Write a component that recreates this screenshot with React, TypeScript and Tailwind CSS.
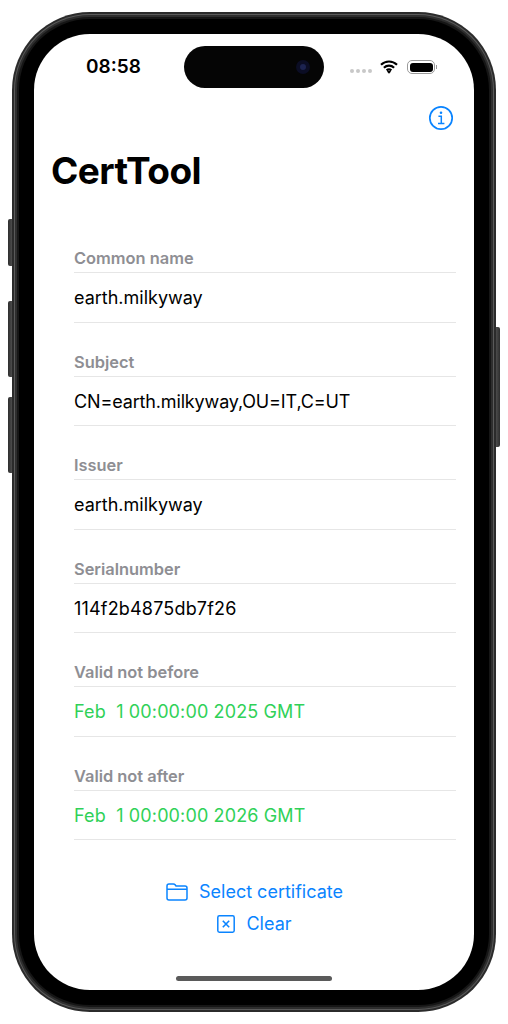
import React from 'react';

const rows = [
  { label: 'Common name', value: 'earth.milkyway', track: 'tracking-normal' },
  { label: 'Subject', value: 'CN=earth.milkyway,OU=IT,C=UT', track: 'tracking-[-0.15px]' },
  { label: 'Issuer', value: 'earth.milkyway', track: 'tracking-normal' },
  { label: 'Serialnumber', value: '114f2b4875db7f26', track: 'tracking-[0.18px]' },
  { label: 'Valid not before', value: 'Feb\u00a0\u00a01 00:00:00 2025 GMT', green: true, track: 'tracking-[0.13px]' },
  { label: 'Valid not after', value: 'Feb\u00a0\u00a01 00:00:00 2026 GMT', green: true, track: 'tracking-[0.13px]' },
];

function StatusBar() {
  return (
    <div className="relative h-[72px] shrink-0">
      <span className="absolute left-[52px] top-[20px] text-[19px] leading-[26px] font-semibold text-black">08:58</span>
      <div className="absolute left-[150px] top-[12px] h-[42px] w-[140px] rounded-[21px] bg-[#050505]">
        <div className="absolute left-[112px] top-[14px] h-[14px] w-[14px] rounded-full bg-[#0b0d24]">
          <div className="absolute left-[4px] top-[4px] h-[6px] w-[6px] rounded-full bg-[#1c2350]"></div>
        </div>
      </div>
      <div className="absolute left-[316px] top-[35px] flex gap-[2px]">
        <span className="h-[4px] w-[4px] rounded-full bg-[#c8c8c8]"></span>
        <span className="h-[4px] w-[4px] rounded-full bg-[#c8c8c8]"></span>
        <span className="h-[4px] w-[4px] rounded-full bg-[#c8c8c8]"></span>
        <span className="h-[4px] w-[4px] rounded-full bg-[#c8c8c8]"></span>
      </div>
      <svg className="absolute left-[346px] top-[26px]" width="18" height="14" viewBox="0 0 18 14" fill="none" stroke="#000" strokeWidth="2.2">
        <path d="M1 4.8C5.5 0.4 12.5 0.4 17 4.8" />
        <path d="M3.9 7.8C6.8 5 11.2 5 14.1 7.8" />
        <path d="M6.6 10.4C8 9.2 10 9.2 11.4 10.4" />
        <path d="M9 13.8L6.9 11.5C8.1 10.6 9.9 10.6 11.1 11.5Z" fill="#000" stroke="none" />
      </svg>
      <div className="absolute left-[373px] top-[26px] flex items-center">
        <div className="h-[14px] w-[28px] rounded-[5px] border border-[#9a9a9a] p-[1.5px]">
          <div className="h-full w-full rounded-[3px] bg-black"></div>
        </div>
        <div className="ml-[1px] h-[4px] w-[1px] bg-[#9a9a9a]"></div>
      </div>
    </div>
  );
}

function InfoIcon() {
  return (
    <svg width="26" height="26" viewBox="0 0 26 26" fill="none" stroke="#0a84ff" strokeWidth="1.7">
      <circle cx="13" cy="13" r="11.2" />
      <path d="M10.4 11.2H13.3V18.4M10 18.6H16.4" strokeWidth="1.5" />
      <circle cx="13" cy="7.8" r="1.3" fill="#0a84ff" stroke="none" />
    </svg>
  );
}

function FolderIcon() {
  return (
    <svg width="22" height="18" viewBox="0 0 22 18" fill="none" stroke="#0a84ff" strokeWidth="1.5">
      <path d="M1 4V3Q1 1 3 1H7.4Q8.4 1 9.1 1.8L10 3H19Q21 3 21 5V15Q21 17 19 17H3Q1 17 1 15Z" strokeLinejoin="round" />
      <path d="M1 6.3H21" />
    </svg>
  );
}

function ClearIcon() {
  return (
    <svg width="18" height="18" viewBox="0 0 18 18" fill="none" stroke="#0a84ff" strokeWidth="1.5">
      <rect x="0.8" y="0.8" width="16.4" height="16.4" rx="1.6" />
      <path d="M5.8 5.8L12.2 12.2M12.2 5.8L5.8 12.2" strokeWidth="1.6" />
    </svg>
  );
}

export default function App() {
  return (
    <div className="relative h-[1024px] w-[508px] overflow-hidden bg-white font-['Inter',sans-serif]">
      {/* side buttons */}
      <div className="absolute left-[8px] top-[219px] h-[47px] w-[6px] rounded-l-[2px] bg-linear-to-r from-[#2e2e2e] to-[#5c5c5c]"></div>
      <div className="absolute left-[8px] top-[301px] h-[76px] w-[6px] rounded-l-[2px] bg-linear-to-r from-[#2e2e2e] to-[#5c5c5c]"></div>
      <div className="absolute left-[8px] top-[397px] h-[76px] w-[6px] rounded-l-[2px] bg-linear-to-r from-[#2e2e2e] to-[#5c5c5c]"></div>
      <div className="absolute left-[494px] top-[327px] h-[120px] w-[6px] rounded-r-[2px] bg-linear-to-l from-[#2e2e2e] to-[#5c5c5c]"></div>

      <div className="pt-[12px] pl-[12px]">
        <div className="relative h-[1000px] w-[484px] rounded-[78px] bg-[#2b2b2b] p-[2px]">
          <div className="h-full w-full rounded-[76px] bg-[#5a5a5a] p-[1px]">
            <div className="h-full w-full rounded-[75px] bg-[#2e2e2e] p-[2px]">
              <div className="h-full w-full rounded-[73px] bg-[#161616] p-[2px]">
                <div className="h-full w-full rounded-[71px] bg-black p-[15px]">
                  <div className="flex h-[956px] w-[440px] flex-col overflow-hidden rounded-[56px] bg-white">
                    <StatusBar />
                    <div className="flex h-[26px] shrink-0 justify-end pr-[20px]">
                      <div className="-mt-[1px]"><InfoIcon /></div>
                    </div>
                    <h1 className="pl-[17px] pt-[16px] text-[37px] leading-[46px] font-bold tracking-[-0.6px] text-black">CertTool</h1>
                    <div className="flex flex-col gap-[30px] pl-[40px] pr-[18px] pt-[55.4px]">
                      {rows.map((r) => (
                        <div key={r.label}>
                          <div className="h-[24px] border-b border-[#e6e6e6] text-[16.4px] leading-[19px] font-semibold text-[#8e8e93]">{r.label}</div>
                          <div className={`flex h-[49.5px] items-center border-b border-[#e6e6e6] text-[18px] ${r.track} ${r.green ? 'text-[#30d158]' : 'text-black'}`}>{r.value}</div>
                        </div>
                      ))}
                    </div>
                    <div className="flex flex-col items-center gap-[6px] pt-[38.6px] text-[18px] leading-[26px] text-[#0a84ff]">
                      <button className="flex items-center gap-[11px] pl-[1px]"><FolderIcon />Select certificate</button>
                      <button className="flex items-center gap-[11px] pl-[1px]"><ClearIcon />Clear</button>
                    </div>
                    <div className="mt-auto mb-[9px] h-[5px] w-[156px] self-center rounded-full bg-[#5a5a5a]"></div>
                  </div>
                </div>
              </div>
            </div>
          </div>
        </div>
      </div>
    </div>
  );
}
